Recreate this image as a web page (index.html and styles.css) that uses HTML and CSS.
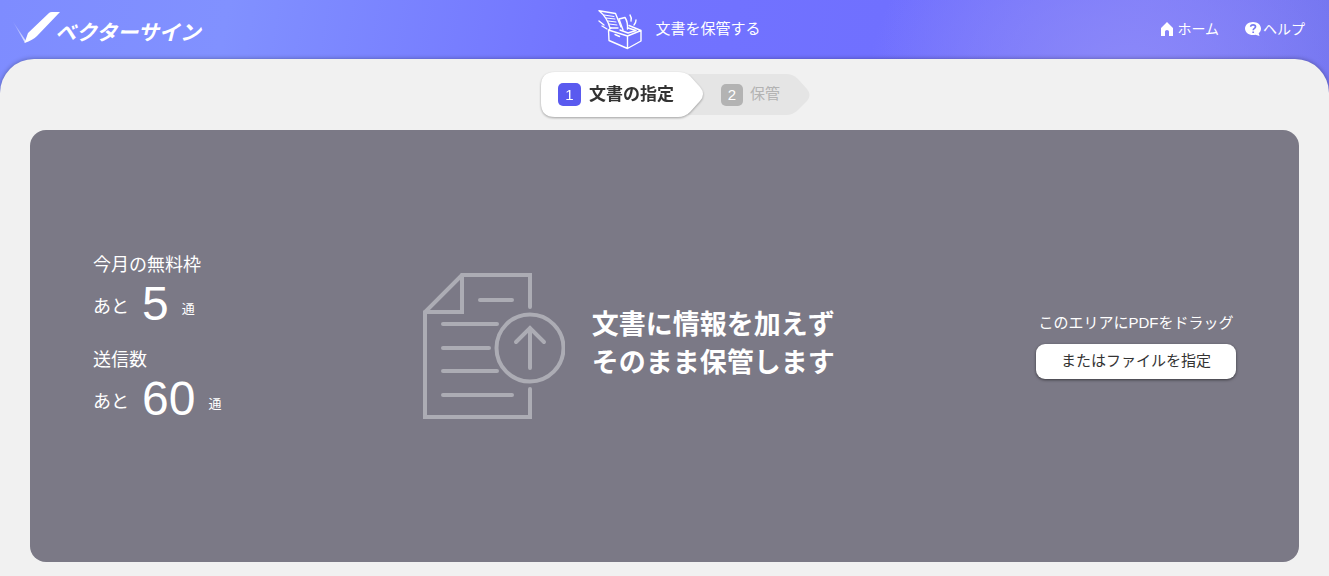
FILE: index.html
```html
<!DOCTYPE html>
<html lang="ja">
<head>
<meta charset="utf-8">
<meta name="viewport" content="width=device-width, initial-scale=1">
<title>文書を保管する</title>
<link rel="stylesheet" href="styles.css">
</head>
<body>
<header class="header">
  <a class="logo" href="#">
    <svg class="logo-mark" viewBox="0 0 48 32" aria-hidden="true">
      <defs>
        <linearGradient id="fade" x1="0" y1="0" x2="1" y2="1">
          <stop offset="0" stop-color="#fff" stop-opacity="0"/>
          <stop offset="1" stop-color="#fff" stop-opacity=".8"/>
        </linearGradient>
      </defs>
      <path d="M0 8 14 29 13 31Z" fill="url(#fade)"/>
      <path d="M12.500 31 16 21 37 1Q38 0 40 0H48L25 24Q21 28 12.500 31Z" fill="#fff"/>
    </svg>
    <span class="logo-text">ベクターサイン</span>
  </a>
  <h1 class="title">
    <svg class="title-icon" viewBox="0 0 44 40" fill="none" stroke="#fff" stroke-width="1.400" stroke-linejoin="round" stroke-linecap="round" aria-hidden="true">
      <path d="M10.500 20 29.500 26 43 20.500V31L29.500 38.500 11 30.500ZM29.500 26V38.500M10.500 20 13 18M43 20.500 31 15.500M30 18 38 20.500 30 23 22 20M17 24.500 21.500 26.500"/>
      <path d="M12 18Q9 7 1 .7L17.500 3.500 23 17M12 18H20"/>
      <path d="M6 5 16 6.500M8 8 17 9M10 11 18 12M11 14 19 15" stroke-width="1"/>
      <path d="M21 9 27 7.500Q30 12 29.500 19M21 9 25 20M1 11 6 15M4 16 9 19M32 5Q34 8 33 11M38 10Q38 13 36 15"/>
    </svg>
    <span>文書を保管する</span>
  </h1>
  <nav class="nav">
    <a href="#"><svg class="home-icon" viewBox="0 0 12 14" aria-hidden="true"><path d="M6 0 12 6V14H8V9.500Q8 8 6 8T4 9.500V14H0V6Z" fill="#fff"/></svg><span>ホーム</span></a>
    <a href="#"><svg class="help-icon" viewBox="0 0 16 14" aria-hidden="true"><path d="M8 0C12.400 0 16 2.800 16 6.500 16 8.500 15.200 10 13.700 11.200L14.500 14 10.500 12.700C5 14 0 11 0 6.500 0 2.800 3.600 0 8 0Z" fill="#fff"/><path d="M5.700 4.700C5.700 2.200 10.500 2.200 10.500 4.800 10.500 6.500 8.200 6.300 8.200 8.200M8.200 9.500V11" fill="none" stroke="#7779f2" stroke-width="1.700"/></svg><span>ヘルプ</span></a>
  </nav>
</header>
<main class="main">
  <ol class="steps">
    <li class="step step-current" aria-current="step">
      <svg class="step-shape" viewBox="0 0 162 45" aria-hidden="true"><path d="M14 0H137Q144 0 149 4L159 15Q165 22 159 29L149 40Q144 45 137 45H14Q0 45 0 31V14Q0 0 14 0Z" fill="#fff"/></svg>
      <span class="step-number">1</span><span class="step-label">文書の指定</span>
    </li>
    <li class="step step-next">
      <svg class="step-shape" viewBox="0 0 122 41" aria-hidden="true"><path d="M0 0H98Q105 0 110 5L119 15Q124 21 119 27L110 36Q105 41 98 41H0Z" fill="#e5e5e5"/></svg>
      <span class="step-number">2</span><span class="step-label">保管</span>
    </li>
  </ol>
  <section class="panel">
    <dl class="quota">
      <div>
        <dt>今月の無料枠</dt>
        <dd><span>あと</span><strong>5</strong><small>通</small></dd>
      </div>
      <div>
        <dt>送信数</dt>
        <dd><span>あと</span><strong>60</strong><small>通</small></dd>
      </div>
    </dl>
    <div class="message">
      <svg class="document-icon" viewBox="0 0 142 146" fill="none" stroke="#acacb4" stroke-width="4" stroke-linecap="round" aria-hidden="true">
        <path d="M107 34V2H39L2 39V144H107V116" stroke-linejoin="miter"/>
        <path d="M39 2V39H2M57 27H89M20 51H74M20 75H66M20 98H74M20 122H89"/>
        <circle cx="107" cy="75" r="33.500"/>
        <path d="M107 95V55M93 69 107 55 121 69"/>
      </svg>
      <h2>文書に情報を加えず<br>そのまま保管します</h2>
    </div>
    <div class="upload">
      <p>このエリアにPDFをドラッグ</p>
      <button type="button">またはファイルを指定</button>
    </div>
  </section>
</main>
</body>
</html>
```
FILE: styles.css
```css
* {
  box-sizing: border-box;
}

body {
  display: flex;
  flex-direction: column;
  min-height: 100vh;
  margin: 0;
  background: radial-gradient(ellipse 260px 180px at 85% 70px, #8b88f9, #8b88f900),
    linear-gradient(100deg, #7e8cff 0, #8191ff 16%, #7274ff 41%, #7070ff 62%, #7c7af8 80%, #6c70ea 100%);
  color: #fff;
  font-family: "Liberation Sans", "Noto Sans CJK JP", sans-serif;
  font-size: 15px;
}

h1, h2, p, ol, dl, dt, dd {
  margin: 0;
  padding: 0;
}

a {
  color: inherit;
  text-decoration: none;
}

svg {
  flex: none;
}

.header {
  display: grid;
  grid-template-columns: 1fr auto 1fr;
  align-items: center;
  height: 59px;
  padding: 0 24px 0 12px;
}

.logo {
  display: flex;
  align-items: center;
}

.logo-mark {
  width: 48px;
  height: 32px;
  margin-bottom: 4px;
}

.logo-text {
  margin-left: -5px;
  padding-top: 6px;
  font-size: 21px;
  font-style: italic;
  font-weight: bold;
  line-height: 28px;
}

.title {
  display: flex;
  align-items: center;
  gap: 13px;
  padding-left: 42px;
  font-size: 15px;
  font-weight: normal;
}

.title span,
.nav span {
  padding-bottom: 4px;
}

.title-icon {
  width: 44px;
  height: 40px;
}

.nav {
  display: flex;
  justify-content: flex-end;
  gap: 26px;
  font-size: 14px;
}

.nav a {
  display: flex;
  align-items: center;
  gap: 4px;
}

.nav a + a {
  gap: 2px;
}

.home-icon {
  width: 12px;
  height: 14px;
}

.help-icon {
  width: 16px;
  height: 14px;
}

.nav svg {
  margin-bottom: 2px;
}

.main {
  display: flex;
  flex: 1;
  flex-direction: column;
  padding: 13px 30px 14px;
  border-radius: 34px 34px 0 0;
  background: #f1f1f1;
  box-shadow: 0 0 5px #0005;
}

.steps {
  display: flex;
  align-items: center;
  justify-content: center;
  height: 45px;
  margin-bottom: 13px;
  padding-left: 22px;
  list-style: none;
}

.step {
  display: flex;
  position: relative;
  align-items: center;
  isolation: isolate;
}

.step-shape {
  position: absolute;
  z-index: -1;
  top: 0;
  right: 0;
  height: 100%;
}

.step-number {
  display: grid;
  place-items: center;
  width: 22px;
  height: 22px;
  border-radius: 5px;
  background: #b3b3b3;
  color: #fff;
}

.step-label {
  padding-bottom: 5px;
}

.step-current {
  z-index: 1;
  gap: 8px;
  width: 162px;
  height: 45px;
  padding-left: 17px;
  color: #333;
  font-size: 17px;
  font-weight: bold;
  filter: drop-shadow(0 1px 1px #0005);
}

.step-current .step-number {
  width: 23px;
  height: 23px;
  background: #5a5aef;
  font-size: 15px;
  font-weight: normal;
}

.step-next {
  gap: 7px;
  width: 107px;
  height: 41px;
  padding-left: 18px;
  color: #b3b3b3;
}

.panel {
  display: flex;
  flex: 1;
  align-items: center;
  justify-content: space-between;
  padding: 0 63px;
  border-radius: 16px;
  background: #7b7986;
}

.quota {
  display: grid;
  gap: 19px;
  padding-bottom: 17px;
  font-size: 18px;
}

.quota dt {
  line-height: 26px;
}

.quota dd {
  display: flex;
  align-items: center;
  gap: 13px;
  padding-top: 2px;
  line-height: 26px;
}

.quota span {
  padding-top: 5px;
}

.quota strong {
  font-size: 48px;
  font-weight: normal;
  line-height: 48px;
}

.quota small {
  padding-top: 9px;
  font-size: 13px;
}

.message {
  display: flex;
  align-items: center;
  gap: 27px;
}

.document-icon {
  width: 142px;
  height: 146px;
}

.message h2 {
  padding-bottom: 4px;
  font-size: 27px;
  line-height: 38px;
}

.upload {
  display: grid;
  justify-items: center;
  gap: 10px;
  padding-bottom: 2px;
}

.upload p {
  line-height: 22px;
}

.upload button {
  width: 200px;
  height: 35px;
  padding: 0 0 4px;
  border: 0;
  border-radius: 9px;
  background: #fff;
  box-shadow: 0 1px 3px #0008;
  color: #333;
  font: inherit;
}
```
